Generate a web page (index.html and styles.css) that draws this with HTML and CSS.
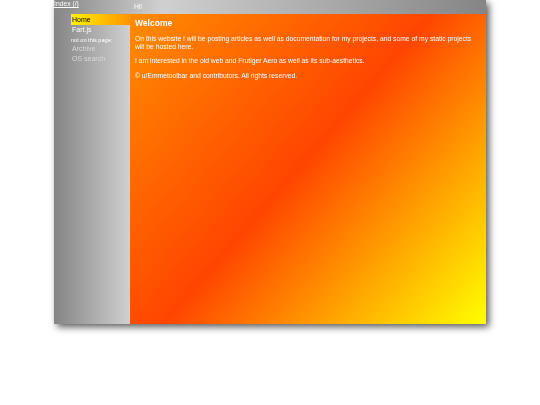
FILE: index.html
```html
<!DOCTYPE html>
<html lang="en">
  <head>
    <meta charset="UTF-8" />
    <title>Hi!</title>
    <link rel="stylesheet" href="styles.css">
  </head>
  <body>
    <div class="window">
      <div class="topbar">
        <a class="index-link" href="#">Index (/)</a>
        <span class="page-title">Hi!</span>
      </div>
      <div class="columns">
        <nav class="sidebar">
          <a class="nav-item current" href="#">Home</a>
          <a class="nav-item" href="#">Fart.js</a>
          <span class="nav-note">not on this page:</span>
          <span class="nav-item muted">Archive</span>
          <span class="nav-item muted">OS search</span>
        </nav>
        <main class="content">
          <h1>Welcome</h1>
          <p>On this website I will be posting articles as well as documentation for my projects, and some of my static projects will be hosted here.</p>
          <p>I am interested in the old web and Frutiger Aero as well as its sub-aesthetics.</p>
          <p>© u/Emmetoolbar and contributors. All rights reserved.</p>
        </main>
      </div>
    </div>
  </body>
</html>
```

FILE: styles.css
```css
/* Page */
body {
  margin: 0;
  min-height: 405px;
  background: #ffffff;
  font-family: "Liberation Sans", Arial, sans-serif;
  font-size: 6.75px;
  color: #ffffff;
  filter: blur(0.4px);
}

/* Main window */
.window {
  width: 432px;
  height: 324px;
  margin-left: 54px;
  display: flex;
  flex-direction: column;
  box-shadow: 3px 3px 7px rgba(0, 0, 0, 0.65);
}

/* Top bar */
.topbar {
  height: 14px;
  flex: none;
  display: flex;
  background: linear-gradient(90deg, #868686 0%, #d0d0d0 25%, #858585 100%);
}
.index-link {
  width: 80px;
  line-height: 8px;
  color: #ffffff;
}
.page-title {
  line-height: 14px;
}

/* Columns */
.columns {
  flex: 1;
  display: flex;
}

/* Sidebar */
.sidebar {
  width: 59px;
  padding-left: 17px;
  display: flex;
  flex-direction: column;
  background: linear-gradient(90deg, #848484 0%, #d0d0d0 100%);
}
.nav-item {
  height: 10.5px;
  line-height: 10.5px;
  padding-left: 1px;
  font-size: 7px;
  color: #ffffff;
  text-decoration: none;
}
.current {
  height: 11px;
  line-height: 11px;
  color: #000000;
  background: linear-gradient(90deg, #fff000 0%, #ff9400 100%);
}
.nav-note {
  height: 8px;
  line-height: 8px;
  font-size: 5.6px;
}
.muted {
  color: #d8d8d8;
}

/* Content */
.content {
  flex: 1;
  padding: 4px 14px 0 5px;
  background: linear-gradient(131deg, #ff8c00 0%, #ff4500 48.5%, #ffff00 100%);
}
h1 {
  margin: 0 0 7px;
  font-size: 8.5px;
  line-height: 10px;
}
p {
  margin: 0 0 7px;
  line-height: 7.5px;
}
```
